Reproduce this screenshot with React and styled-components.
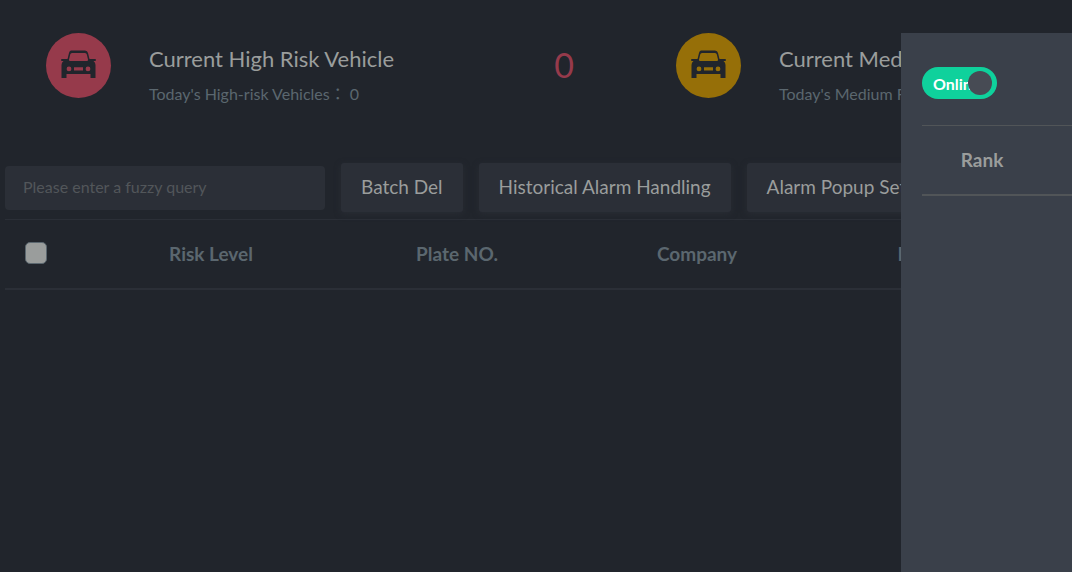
import React from "react";
import styled, { createGlobalStyle } from "styled-components";

const GlobalStyle = createGlobalStyle`
  * {
    box-sizing: border-box;
  }
  body {
    margin: 0;
    background-color: #21252c;
    color: #9a9d9c;
    font-family: Lato, "Noto Sans CJK TC", sans-serif;
  }
`;

const Page = styled.main`
  position: relative;
  min-height: 100vh;
  padding: 0 5px;
  overflow: hidden;
`;

const Stats = styled.section`
  display: flex;
  padding-top: 33px;
`;

const StatCard = styled.article`
  display: flex;
  flex: 0 0 630px;
  align-items: flex-start;
  height: 130px;
  padding: 0 61px 0 41px;
`;

const StatIcon = styled.div`
  width: 65px;
  height: 65px;
  border-radius: 50%;
  background-color: ${(props) => props.$color};
`;

const StatText = styled.div`
  flex: 1;
  padding: 11px 0 0 38px;
`;

const StatTitle = styled.h2`
  margin: 0;
  font-size: 22px;
  line-height: 30px;
  font-weight: 400;
`;

const StatNote = styled.p`
  margin: 8px 0 0;
  color: #5b676f;
  font-size: 16px;
  line-height: 24px;
`;

const StatValue = styled.strong`
  padding-top: 12px;
  color: ${(props) => props.$color};
  font-size: 34px;
  line-height: 40px;
  font-weight: 400;
`;

const Toolbar = styled.div`
  display: flex;
  align-items: center;
  gap: 16px;
  height: 49px;
  margin-bottom: 7px;
`;

const SearchInput = styled.input`
  flex: 0 0 320px;
  height: 44px;
  padding: 0 18px 2px;
  border: 0;
  border-radius: 4px;
  background-color: #2b2f37;
  color: #9a9d9c;
  font-family: inherit;
  font-size: 16px;
  &::placeholder {
    color: #52565a;
    opacity: 1;
  }
`;

const Button = styled.button`
  flex: none;
  height: 49px;
  padding: 0 20px 2px;
  border: 0;
  border-radius: 3px;
  background-color: #2b2f37;
  box-shadow: 0 2px 6px #292d34;
  color: #9a9d9c;
  font-family: inherit;
  font-size: 19px;
`;

const DataTable = styled.table`
  width: ${(props) => props.$width}px;
  table-layout: fixed;
  border-collapse: separate;
  border-spacing: 0;
  color: ${(props) => props.$color};
  & th {
    height: 71px;
    padding: 0 0 2px;
    border-top: 1px solid ${(props) => props.$line};
    border-bottom: 2px solid ${(props) => props.$line};
    font-size: 19px;
    font-weight: 700;
  }
`;

const CheckCell = styled.th`
  width: 80px;
  text-align: left;
`;

const HeadCell = styled.th`
  width: ${(props) => props.$width}px;
`;

const Checkbox = styled.input`
  display: block;
  appearance: none;
  width: 22px;
  height: 22px;
  margin: 0 0 0 20px;
  border: 1px solid #5b676f;
  border-radius: 5px;
  background-color: #9a9d9c;
`;

const Drawer = styled.aside`
  position: absolute;
  top: 33px;
  right: 0;
  bottom: 0;
  width: 171px;
  padding: 34px 0 0 21px;
  overflow: hidden;
  background-color: #3a404a;
`;

const Switch = styled.label`
  display: flex;
  align-items: center;
  position: relative;
  width: 75px;
  height: 32px;
  margin-bottom: 26px;
  padding-left: 11px;
  border-radius: 16px;
  background-color: #0fd19c;
  color: #fff;
  font-size: 16px;
  font-weight: 700;
`;

const SwitchInput = styled.input`
  position: absolute;
  top: 4px;
  right: 5px;
  appearance: none;
  width: 24px;
  height: 24px;
  margin: 0;
  border-radius: 50%;
  background-color: #474b54;
`;

const stats = [
  {
    title: "Current High Risk Vehicle",
    note: "Today's High-risk Vehicles",
    value: 0,
    today: 0,
    color: "#963a4b",
  },
  {
    title: "Current Medium Risk Vehicle",
    note: "Today's Medium Risk Vehicles",
    value: 0,
    today: 0,
    color: "#966f08",
  },
];

const actions = ["Batch Del", "Historical Alarm Handling", "Alarm Popup Settings"];

const columns = [
  { title: "Risk Level", width: 252 },
  { title: "Plate NO.", width: 240 },
  { title: "Company", width: 240 },
  { title: "Direction", width: 240 },
];

function CarIcon() {
  return (
    <svg viewBox="0 0 65 65" width="65" height="65" aria-hidden="true">
      <path
        fill="#21252c"
        fillRule="evenodd"
        d="M25 17.500h14q2.500 0 3 2.500l1.500 6H49q1 0 1 1t-1 1h-1.500q2 1.500 2 4v13h-5v-4h-24v4h-5V32q0-2.500 2-4H16q-1 0-1-1t1-1h5.500L23 20q.5-2.500 2-2.500zM26 20q-1.500 0-1.800 1.500L23 26.500q-.3 1.500 1.200 1.500h16.600q1.500 0 1.200-1.500l-1.200-5Q40.500 20 39 20zM23 33.500a2.400 2.400 0 1 0 0 4.800 2.400 2.400 0 0 0 0-4.800zM28 34.200v3.200h9v-3.200zM42 33.500a2.400 2.400 0 1 0 0 4.800 2.400 2.400 0 0 0 0-4.800z"
      />
    </svg>
  );
}

function App() {
  return (
    <Page>
      <GlobalStyle />
      <Stats>
        {stats.map((item) => (
          <StatCard key={item.title}>
            <StatIcon $color={item.color}>
              <CarIcon />
            </StatIcon>
            <StatText>
              <StatTitle>{item.title}</StatTitle>
              <StatNote>
                {item.note}： {item.today}
              </StatNote>
            </StatText>
            <StatValue $color={item.color}>{item.value}</StatValue>
          </StatCard>
        ))}
      </Stats>
      <Toolbar>
        <SearchInput
          type="text"
          aria-label="Fuzzy query"
          placeholder="Please enter a fuzzy query"
        />
        {actions.map((title) => (
          <Button type="button" key={title}>
            {title}
          </Button>
        ))}
      </Toolbar>
      <DataTable $width={1052} $color="#5b676f" $line="#2b2f37">
        <thead>
          <tr>
            <CheckCell>
              <Checkbox type="checkbox" aria-label="Select all" />
            </CheckCell>
            {columns.map((item) => (
              <HeadCell key={item.title} $width={item.width}>
                {item.title}
              </HeadCell>
            ))}
          </tr>
        </thead>
      </DataTable>
      <Drawer>
        <Switch>
          Online
          <SwitchInput type="checkbox" defaultChecked />
        </Switch>
        <DataTable $width={240} $color="#9a9d9c" $line="#515558">
          <thead>
            <tr>
              <HeadCell $width={120}>Rank</HeadCell>
              <HeadCell $width={120} />
            </tr>
          </thead>
        </DataTable>
      </Drawer>
    </Page>
  );
}

export default App;
